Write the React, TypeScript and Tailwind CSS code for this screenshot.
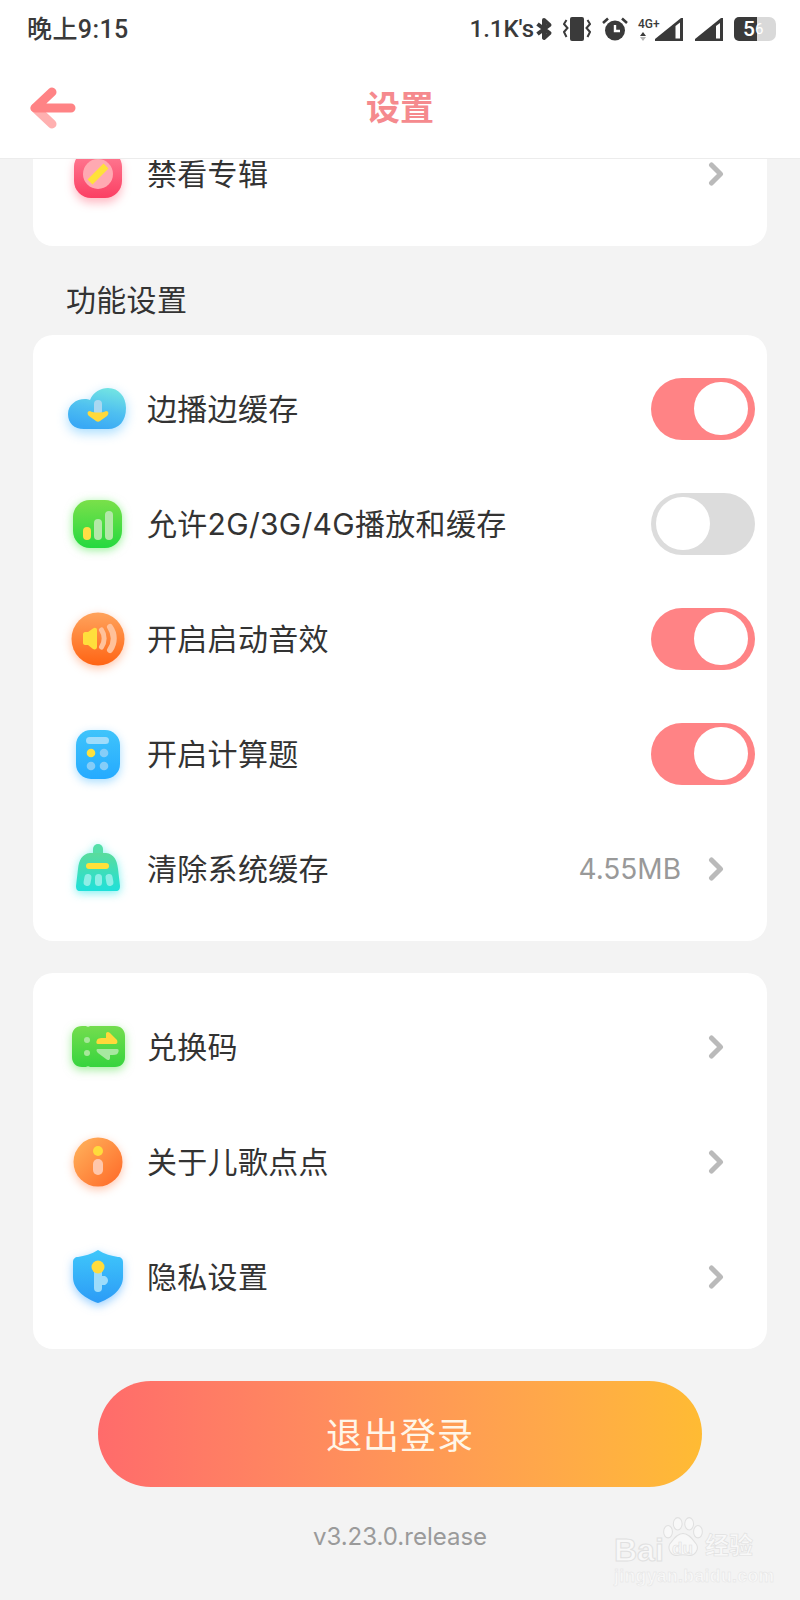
import type { ReactNode } from 'react';

const FONT = "font-['Inter','Noto_Sans_CJK_SC',sans-serif]";
const STATUS_FONT = "font-['Roboto','Noto_Sans_CJK_SC',sans-serif]";

function Chevron() {
  return (
    <svg width="16" height="24" viewBox="0 0 16 24" className="shrink-0">
      <path d="M3.5 3 L12.5 12 L3.5 21" fill="none" stroke="#bababa" strokeWidth="5" strokeLinecap="round" strokeLinejoin="round" />
    </svg>
  );
}

function Toggle({ on }: { on: boolean }) {
  return (
    <div className={`flex h-[62px] w-[104px] items-center rounded-full ${on ? 'justify-end bg-[#ff8385] pr-[7px]' : 'justify-start bg-[#dcdcdc] pl-[5px]'}`}>
      <div className="h-[53px] w-[54px] rounded-full bg-white" />
    </div>
  );
}

function BlockIcon() {
  return (
    <svg width="60" height="60" viewBox="0 0 60 60" className="overflow-visible drop-shadow-[0_5px_5px_rgba(255,60,90,0.35)]">
      <defs>
        <linearGradient id="gBlock" x1="0" y1="0" x2="0" y2="1">
          <stop offset="0" stopColor="#ff7f96" />
          <stop offset="1" stopColor="#fb3f63" />
        </linearGradient>
      </defs>
      <rect x="6" y="6" width="48" height="48" rx="17" fill="url(#gBlock)" />
      <circle cx="30" cy="30" r="15" fill="#ffa9b2" />
      <path d="M22 38 L38 22" stroke="#ffe13a" strokeWidth="7" />
    </svg>
  );
}

function CloudIcon() {
  return (
    <svg width="60" height="60" viewBox="0 0 60 60" className="overflow-visible drop-shadow-[0_4px_6px_rgba(60,180,255,0.45)]">
      <defs>
        <linearGradient id="gCloud" x1="0.8" y1="0" x2="0.5" y2="1">
          <stop offset="0" stopColor="#74e6e2" />
          <stop offset="0.55" stopColor="#4fc0f0" />
          <stop offset="1" stopColor="#39a9f5" />
        </linearGradient>
      </defs>
      <path d="M16 50 C6 50 0 44 0 35 C0 26 8 20 17 20 C19 20 20 20 22 21 C25 13 33 9 40 9 C51 9 58 18 58 29 C58 42 51 50 40 50 Z" fill="url(#gCloud)" />
      <rect x="26" y="21" width="8" height="15" rx="4" fill="#a9d8f0" />
      <path d="M22 32 C25 34 35 34 38 32 C41 32 41 35 39 37 L32 42 C31 43 29 43 28 42 L21 37 C19 35 19 32 22 32 Z" fill="#ffd93a" />
    </svg>
  );
}

function SignalIcon() {
  return (
    <svg width="60" height="60" viewBox="0 0 60 60" className="overflow-visible drop-shadow-[0_2px_5px_rgba(60,230,60,0.55)]">
      <defs>
        <linearGradient id="gSignal" x1="0" y1="0" x2="0" y2="1">
          <stop offset="0" stopColor="#7ae04a" />
          <stop offset="1" stopColor="#24d93f" />
        </linearGradient>
      </defs>
      <rect x="5" y="6" width="49" height="48" rx="17" fill="url(#gSignal)" />
      <rect x="15" y="33" width="8" height="13" rx="4" fill="#ffde45" />
      <rect x="26" y="25" width="8" height="21" rx="4" fill="#b3e8a9" />
      <rect x="37" y="17" width="8" height="29" rx="4" fill="#b3e8a9" />
    </svg>
  );
}

function SoundIcon() {
  return (
    <svg width="60" height="60" viewBox="0 0 60 60" className="overflow-visible drop-shadow-[0_3px_5px_rgba(255,110,40,0.4)]">
      <defs>
        <linearGradient id="gSound" x1="0" y1="0" x2="0" y2="1">
          <stop offset="0" stopColor="#ffa35c" />
          <stop offset="1" stopColor="#ff6414" />
        </linearGradient>
      </defs>
      <circle cx="30" cy="30" r="26.5" fill="url(#gSound)" />
      <path d="M15 25 C15 24 16 23 17 23 L20 23 L25 19.5 C27 18 29 19 29 21 L29 38 C29 40 27 41 25 40 L20 36 L17 36 C16 36 15 35 15 34 Z" fill="#ffdf3c" />
      <path d="M33.5 21 C37 26 37 33 33.5 38" fill="none" stroke="#ffc19a" strokeWidth="5" strokeLinecap="round" />
      <path d="M42 18 C47 25 47 34 42 41" fill="none" stroke="#ffc19a" strokeWidth="6" strokeLinecap="round" />
    </svg>
  );
}

function CalcIcon() {
  return (
    <svg width="60" height="60" viewBox="0 0 60 60" className="overflow-visible drop-shadow-[0_3px_5px_rgba(60,180,255,0.45)]">
      <defs>
        <linearGradient id="gCalc" x1="0" y1="0" x2="0" y2="1">
          <stop offset="0" stopColor="#3fc4fb" />
          <stop offset="1" stopColor="#25aaff" />
        </linearGradient>
      </defs>
      <rect x="8" y="6" width="44" height="49" rx="15" fill="url(#gCalc)" />
      <rect x="18" y="13" width="23" height="7" rx="3.5" fill="#9fdcfb" />
      <circle cx="23" cy="29" r="4.3" fill="#ffe23f" />
      <circle cx="36" cy="29" r="4.3" fill="#85cdf8" />
      <circle cx="23" cy="42" r="4.3" fill="#85cdf8" />
      <circle cx="36" cy="42" r="4.3" fill="#85cdf8" />
    </svg>
  );
}

function BroomIcon() {
  return (
    <svg width="60" height="60" viewBox="0 0 60 60" className="overflow-visible drop-shadow-[0_2px_5px_rgba(30,230,230,0.6)]">
      <defs>
        <linearGradient id="gBroom" x1="0" y1="0" x2="0" y2="1">
          <stop offset="0" stopColor="#5adc9c" />
          <stop offset="1" stopColor="#1fe0da" />
        </linearGradient>
      </defs>
      <rect x="25" y="5" width="10" height="18" rx="5" fill="#55dfa8" />
      <path d="M22 14 L38 14 C46 15 49 21 50 30 L52 47 C52 50 51 52 48 52 L12 52 C9 52 8 50 8 47 L10 30 C11 21 14 15 22 14 Z" fill="url(#gBroom)" />
      <rect x="18" y="24" width="23" height="6" rx="3" fill="#ffe13a" />
      <rect x="16" y="35" width="7" height="12" rx="3.5" fill="#8deee6" transform="rotate(10 19.5 41)" />
      <rect x="27" y="35" width="7" height="12" rx="3.5" fill="#8deee6" />
      <rect x="38" y="35" width="7" height="12" rx="3.5" fill="#8deee6" transform="rotate(-10 41.5 41)" />
    </svg>
  );
}

function TicketIcon() {
  return (
    <svg width="60" height="60" viewBox="0 0 60 60" className="overflow-visible drop-shadow-[0_3px_5px_rgba(70,220,60,0.5)]">
      <defs>
        <linearGradient id="gTicket" x1="0" y1="0" x2="0" y2="1">
          <stop offset="0" stopColor="#74dd4e" />
          <stop offset="1" stopColor="#36d43e" />
        </linearGradient>
      </defs>
      <path d="M14 9 L18 9 C19 10 21 10 22 9 L47 9 C53 9 57 13 57 19 L57 40 C57 46 53 50 47 50 L22 50 C21 49 19 49 18 50 L14 50 C8 50 4 46 4 40 L4 19 C4 13 8 9 14 9 Z" fill="url(#gTicket)" />
      <circle cx="19" cy="23" r="3" fill="#a7e89a" />
      <circle cx="19" cy="36" r="3" fill="#a7e89a" />
      <path d="M29 23 C30 21 33 21 38 21 L38 17 C38 15 40 14 42 16 L49 23 C50 26 49 27 47 27 L30 27 C28 27 28 25 29 23 Z" fill="#ffd93a" />
      <path d="M30 32 L49 32 C51 32 51 34 50 36 C49 38 46 38 42 38 L42 41 C42 43 40 44 38 42 L30 36 C28 34 28 32 30 32 Z" fill="#a7e8a0" />
    </svg>
  );
}

function InfoIcon() {
  return (
    <svg width="60" height="60" viewBox="0 0 60 60" className="overflow-visible drop-shadow-[0_3px_5px_rgba(255,110,50,0.4)]">
      <defs>
        <linearGradient id="gInfo" x1="0.1" y1="0.1" x2="0.9" y2="0.9">
          <stop offset="0" stopColor="#ffad58" />
          <stop offset="1" stopColor="#ff6f2c" />
        </linearGradient>
      </defs>
      <circle cx="30" cy="30" r="24.5" fill="url(#gInfo)" />
      <circle cx="30" cy="19" r="5" fill="#ffdc3c" />
      <rect x="25" y="27" width="10" height="16" rx="5" fill="#ffc7ac" />
    </svg>
  );
}

function ShieldIcon() {
  return (
    <svg width="60" height="60" viewBox="0 0 60 60" className="overflow-visible drop-shadow-[0_3px_5px_rgba(50,160,255,0.5)]">
      <defs>
        <linearGradient id="gShield" x1="0" y1="0" x2="0" y2="1">
          <stop offset="0" stopColor="#3fc7fb" />
          <stop offset="1" stopColor="#2c9bf6" />
        </linearGradient>
      </defs>
      <path d="M30 3 C36 7 44 9 50 10 C53 10 55 12 55 15 L55 30 C55 43 42 52 30 56 C18 52 5 43 5 30 L5 15 C5 12 7 10 10 10 C16 9 24 7 30 3 Z" fill="url(#gShield)" />
      <rect x="26" y="22" width="8" height="23" rx="4" fill="#9ddcfb" />
      <path d="M30 29 L37 29 C41 31 41 36 37 38 L30 38 Z" fill="#9ddcfb" />
      <circle cx="30" cy="20" r="6.5" fill="#ffdc3c" />
    </svg>
  );
}

function Row({ icon, label, right }: { icon: ReactNode; label: string; right: ReactNode }) {
  return (
    <div className="flex h-[115px] items-center pl-[35px] pr-[12px]">
      <div className="flex h-[60px] w-[60px] shrink-0 items-center justify-center blur-[0.5px]">{icon}</div>
      <div className="ml-[19px] flex-1 text-[30px] leading-none tracking-[0.3px] text-[#333333]">{label}</div>
      {right}
    </div>
  );
}

function Arrow({ note }: { note?: string }) {
  return (
    <div className="flex items-center pr-[31px]">
      {note && <span className="mr-[27px] text-[28px] leading-none text-[#999999]">{note}</span>}
      <Chevron />
    </div>
  );
}

function StatusIcons() {
  return (
    <div className="flex items-center">
      <span className="text-[24px] font-medium leading-none text-[#3a3a3a]">1.1K's</span>
      {/* bluetooth */}
      <svg width="18" height="24" viewBox="0 0 18 24" className="ml-[1px]">
        <path d="M2.5 7 L14.5 16 L9 21 L9 3 L14.5 8 L2.5 17" fill="none" stroke="#3a3a3a" strokeWidth="4" strokeLinejoin="round" />
      </svg>
      {/* vibrate */}
      <svg width="28" height="24" viewBox="0 0 28 24" className="ml-[10px]">
        <rect x="7" y="0" width="14" height="24" rx="2" fill="#3a3a3a" />
        <path d="M3.5 3 L1 7 L4.5 11 L1 15 L3.5 20 M24.5 3 L27 7 L23.5 11 L27 15 L24.5 20" fill="none" stroke="#3a3a3a" strokeWidth="2" />
      </svg>
      {/* alarm */}
      <svg width="26" height="24" viewBox="0 0 26 24" className="ml-[11px]">
        <circle cx="13" cy="13.5" r="10" fill="#3a3a3a" />
        <path d="M13 8 L13 14 L18 14" fill="none" stroke="#ffffff" strokeWidth="2.4" />
        <path d="M1 6 L6 1.5 M25 6 L20 1.5" stroke="#3a3a3a" strokeWidth="2.6" />
      </svg>
      {/* 4G+ with signal */}
      <div className="relative ml-[10px] h-[24px] w-[45px]">
        <span className="absolute left-0 top-[1px] text-[12px] font-medium leading-[12px] text-[#3a3a3a]">4G+</span>
        <svg width="45" height="24" viewBox="0 0 45 24" className="absolute left-0 top-0">
          <path d="M5 15 L8 19 L2 19 Z" fill="#3a3a3a" />
          <path d="M2 20 L8 20 L5 24 Z" fill="#b5b5b5" />
          <path d="M17 22 L43 1 L45 1 L45 24 L17 24 Z" fill="#3a3a3a" />
          <path d="M37.5 9 L42 5.5 L42 21.5 L37.5 21.5 Z" fill="#ffffff" />
        </svg>
      </div>
      {/* signal */}
      <svg width="28" height="24" viewBox="0 0 28 24" className="ml-[12px]">
        <path d="M0 22 L26 1 L28 1 L28 24 L0 24 Z" fill="#3a3a3a" />
        <path d="M21 9 L25 6 L25 21.5 L21 21.5 Z" fill="#ffffff" />
      </svg>
      {/* battery */}
      <div className="relative ml-[11px] flex h-[24px] w-[42px] rounded-[7px] bg-[#d9d9d9]">
        <div className="h-full w-[23px] rounded-l-[5px] bg-[#3a3a3a]" />
        <span className="absolute left-[9px] top-[1px] text-[21px] font-medium leading-[22px] text-white">5</span>
        <span className="absolute left-[21px] top-[1px] text-[15px] leading-[22px] text-white">6</span>
      </div>
    </div>
  );
}

function Watermark() {
  return (
    <div className="absolute left-[614px] top-[1514px] h-[72px] w-[150px] text-[#f8f8f8]">
      <span className="absolute left-0 top-[20px] font-['Liberation_Sans',sans-serif] text-[32px] font-bold leading-none [-webkit-text-stroke:1px_#e0e0e0]">Bai</span>
      <svg width="44" height="46" viewBox="0 0 50 46" className="absolute left-[47px] top-0">
        <g fill="#f8f8f8" stroke="#e0e0e0" strokeWidth="1.2">
          <ellipse cx="8" cy="17" rx="5" ry="7" />
          <ellipse cx="19" cy="8" rx="5" ry="7" />
          <ellipse cx="32" cy="8" rx="5" ry="7" />
          <ellipse cx="42" cy="17" rx="5" ry="7" />
          <path d="M25 19 C32 19 36 26 40 31 C44 37 38 45 32 44 C28 43 22 43 18 44 C12 45 7 37 10 31 C14 26 18 19 25 19 Z" />
        </g>
      </svg>
      <span className="absolute left-[58px] top-[26px] font-['Liberation_Sans',sans-serif] text-[17px] font-bold leading-none [-webkit-text-stroke:0.6px_#e0e0e0]">du</span>
      <span className="absolute left-[91px] top-[20px] text-[24px] font-bold leading-none [-webkit-text-stroke:0.6px_#e0e0e0]">经验</span>
      <span className="absolute left-0 top-[54px] font-['Liberation_Sans',sans-serif] text-[17.5px] font-bold leading-none tracking-[0.4px] [-webkit-text-stroke:0.4px_#e2e2e2]">jingyan.baidu.com</span>
    </div>
  );
}

export default function App() {
  return (
    <div className={`relative h-[1600px] w-[800px] overflow-hidden bg-[#f3f3f3] ${FONT}`}>
      {/* Status bar + nav */}
      <div className="relative z-10 h-[159px] border-b border-[#ececec] bg-white">
        <div className={`flex h-[58px] items-center justify-between pl-[27px] pr-[24px] ${STATUS_FONT}`}>
          <span className="text-[25px] font-medium leading-none tracking-[0.4px] text-[#3a3a3a]">晚上9:15</span>
          <StatusIcons />
        </div>
        <div className="flex h-[100px] items-center">
          <div className="flex flex-1">
            <svg width="46" height="42" viewBox="0 0 46 42" className="ml-[30px]">
              <path d="M5 21 L22 37" fill="none" stroke="#ffb0b0" strokeWidth="9" strokeLinecap="round" />
              <path d="M22 5 L5 21 H41" fill="none" stroke="#ff8385" strokeWidth="9" strokeLinecap="round" strokeLinejoin="round" />
            </svg>
          </div>
          <span className="text-[34px] font-bold leading-none text-[#f58a8e]">设置</span>
          <div className="flex-1" />
        </div>
      </div>

      {/* Scrolled-off first card, its top runs under the header */}
      <div className="mx-[33px] h-[87px] rounded-b-[20px] bg-white">
        <div className="-translate-y-[43px]">
          <Row icon={<BlockIcon />} label="禁看专辑" right={<Arrow />} />
        </div>
      </div>

      <div className="pl-[66px] pt-[39px] text-[30px] leading-none tracking-[0.3px] text-[#333333]">功能设置</div>

      <div className="mx-[33px] mt-[20px] rounded-[20px] bg-white pb-[15px] pt-[16px]">
        <Row icon={<CloudIcon />} label="边播边缓存" right={<Toggle on />} />
        <Row icon={<SignalIcon />} label="允许2G/3G/4G播放和缓存" right={<Toggle on={false} />} />
        <Row icon={<SoundIcon />} label="开启启动音效" right={<Toggle on />} />
        <Row icon={<CalcIcon />} label="开启计算题" right={<Toggle on />} />
        <Row icon={<BroomIcon />} label="清除系统缓存" right={<Arrow note="4.55MB" />} />
      </div>

      <div className="mx-[33px] mt-[32px] rounded-[20px] bg-white pb-[15px] pt-[16px]">
        <Row icon={<TicketIcon />} label="兑换码" right={<Arrow />} />
        <Row icon={<InfoIcon />} label="关于儿歌点点" right={<Arrow />} />
        <Row icon={<ShieldIcon />} label="隐私设置" right={<Arrow />} />
      </div>

      <div className="mx-[98px] mt-[32px] flex h-[106px] items-center justify-center rounded-full bg-gradient-to-r from-[#ff6b6b] to-[#ffbb33]">
        <span className="pt-[4px] text-[36px] leading-none tracking-[1px] text-[#fff6e8]">退出登录</span>
      </div>

      <div className="mx-auto mt-[38px] w-fit text-[24px] leading-none text-[#9a9a9a]">v3.23.0.release</div>

      <Watermark />
    </div>
  );
}
